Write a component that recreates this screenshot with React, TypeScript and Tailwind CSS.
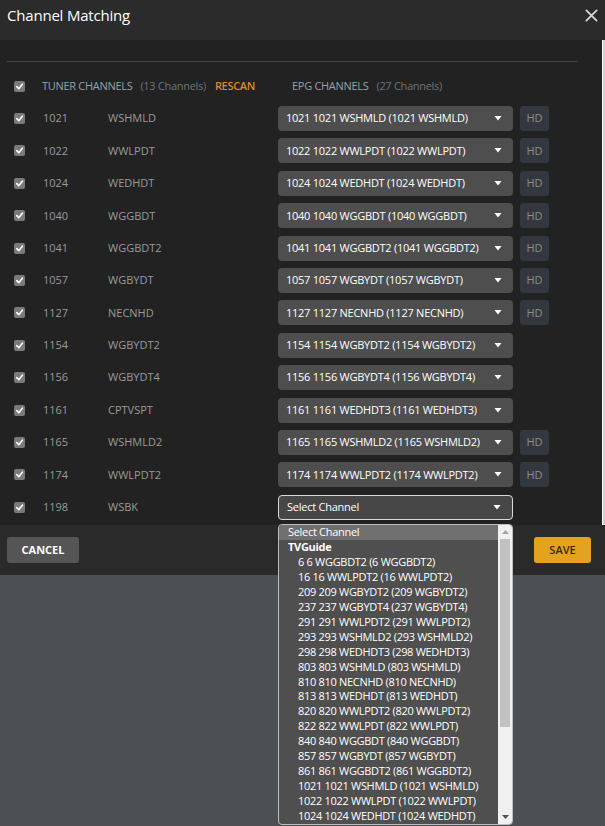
import React from "react";

type Row = { num: string; name: string; epg: string; hd: boolean };

const rows: Row[] = [
  { num: "1021", name: "WSHMLD", epg: "1021 1021 WSHMLD (1021 WSHMLD)", hd: true },
  { num: "1022", name: "WWLPDT", epg: "1022 1022 WWLPDT (1022 WWLPDT)", hd: true },
  { num: "1024", name: "WEDHDT", epg: "1024 1024 WEDHDT (1024 WEDHDT)", hd: true },
  { num: "1040", name: "WGGBDT", epg: "1040 1040 WGGBDT (1040 WGGBDT)", hd: true },
  { num: "1041", name: "WGGBDT2", epg: "1041 1041 WGGBDT2 (1041 WGGBDT2)", hd: true },
  { num: "1057", name: "WGBYDT", epg: "1057 1057 WGBYDT (1057 WGBYDT)", hd: true },
  { num: "1127", name: "NECNHD", epg: "1127 1127 NECNHD (1127 NECNHD)", hd: true },
  { num: "1154", name: "WGBYDT2", epg: "1154 1154 WGBYDT2 (1154 WGBYDT2)", hd: false },
  { num: "1156", name: "WGBYDT4", epg: "1156 1156 WGBYDT4 (1156 WGBYDT4)", hd: false },
  { num: "1161", name: "CPTVSPT", epg: "1161 1161 WEDHDT3 (1161 WEDHDT3)", hd: false },
  { num: "1165", name: "WSHMLD2", epg: "1165 1165 WSHMLD2 (1165 WSHMLD2)", hd: true },
  { num: "1174", name: "WWLPDT2", epg: "1174 1174 WWLPDT2 (1174 WWLPDT2)", hd: true },
];

const options = [
  "6 6 WGGBDT2 (6 WGGBDT2)",
  "16 16 WWLPDT2 (16 WWLPDT2)",
  "209 209 WGBYDT2 (209 WGBYDT2)",
  "237 237 WGBYDT4 (237 WGBYDT4)",
  "291 291 WWLPDT2 (291 WWLPDT2)",
  "293 293 WSHMLD2 (293 WSHMLD2)",
  "298 298 WEDHDT3 (298 WEDHDT3)",
  "803 803 WSHMLD (803 WSHMLD)",
  "810 810 NECNHD (810 NECNHD)",
  "813 813 WEDHDT (813 WEDHDT)",
  "820 820 WWLPDT2 (820 WWLPDT2)",
  "822 822 WWLPDT (822 WWLPDT)",
  "840 840 WGGBDT (840 WGGBDT)",
  "857 857 WGBYDT (857 WGBYDT)",
  "861 861 WGGBDT2 (861 WGGBDT2)",
  "1021 1021 WSHMLD (1021 WSHMLD)",
  "1022 1022 WWLPDT (1022 WWLPDT)",
  "1024 1024 WEDHDT (1024 WEDHDT)",
];

function Check() {
  return (
    <div className="w-[11px] h-[11px] rounded-[2px] bg-[#7a7a7a] flex items-center justify-center shrink-0">
      <svg width="9" height="9" viewBox="0 0 10 10">
        <path d="M2 5.2 L4.2 7.4 L8.2 2.4" fill="none" stroke="#ffffff" strokeWidth="1.8" strokeLinecap="round" strokeLinejoin="round" />
      </svg>
    </div>
  );
}

function Caret() {
  return (
    <svg width="8" height="5" viewBox="0 0 8 5" className="shrink-0">
      <path d="M0.5 0 L7.5 0 L4 4.5 Z" fill="#ffffff" />
    </svg>
  );
}

function Select({ label, open }: { label: string; open?: boolean }) {
  return (
    <div
      className={
        "w-[235px] h-[25px] rounded-[4px] flex items-center justify-between pl-[8px] pr-[11px] text-[11px] tracking-[-0.25px] text-white " +
        (open ? "bg-[#474747] border border-[#d8d8d8]" : "bg-[#4e4e4e]")
      }
    >
      <span className="whitespace-nowrap">{label}</span>
      <Caret />
    </div>
  );
}

export default function App() {
  return (
    <div
      className="relative w-[605px] h-[826px] overflow-hidden bg-[#4c5055]"
      style={{ fontFamily: '"Open Sans", "Noto Sans", sans-serif' }}
    >
      {/* header */}
      <div className="h-[40px] bg-[#2b2b2b] flex items-center justify-between pl-[7px] pr-[7px] pb-[9px]">
        <span className="text-[15px] text-white leading-none tracking-[-0.2px]">Channel Matching</span>
        <svg width="13" height="13" viewBox="0 0 14 14">
          <path d="M1.5 1.5 L12.5 12.5 M12.5 1.5 L1.5 12.5" stroke="#d6d6d6" strokeWidth="2" strokeLinecap="round" />
        </svg>
      </div>

      {/* body */}
      <div className="h-[485px] bg-[#222222] flex">
        <div className="flex-1 pt-[21px]">
          <div className="ml-[7px] w-[571px] h-px bg-[#444444]" />
          <div className="mt-[8px] h-[32.4px] flex items-center pl-[14px] text-[11px] tracking-[-0.3px]">
            <Check />
            <div className="ml-[17px] w-[250px] flex items-center whitespace-nowrap">
              <span className="text-[#98a0a8]">TUNER CHANNELS</span>
              <span className="ml-[8px] text-[#6c737a]">(13 Channels)</span>
              <span className="ml-[9px] text-[#d88a2c] font-semibold">RESCAN</span>
            </div>
            <div className="flex items-center whitespace-nowrap">
              <span className="text-[#98a0a8]">EPG CHANNELS</span>
              <span className="ml-[8px] text-[#6c737a]">(27 Channels)</span>
            </div>
          </div>
          {rows.map((r) => (
            <div key={r.num} className="h-[32.4px] flex items-center pl-[14px] text-[11px]">
              <Check />
              <span className="ml-[18px] w-[65px] text-[#9a9a9a]">{r.num}</span>
              <span className="w-[170px] text-[#9a9a9a]">{r.name}</span>
              <Select label={r.epg} />
              {r.hd && (
                <div className="ml-[7px] w-[29px] h-[25px] rounded-[3px] bg-[#32383d] flex items-center justify-center text-[11px] text-[#8a8f94]">
                  HD
                </div>
              )}
            </div>
          ))}
          <div className="h-[32.4px] flex items-center pl-[14px] text-[11px]">
            <Check />
            <span className="ml-[18px] w-[65px] text-[#9a9a9a]">1198</span>
            <span className="w-[170px] text-[#9a9a9a]">WSBK</span>
            <Select label="Select Channel" open />
          </div>
        </div>
        <div className="w-[3px] bg-[#cfcfcf] border-l border-white" />
      </div>

      {/* footer */}
      <div className="h-[50px] bg-[#2a2a2a] flex items-center justify-between pl-[7px] pr-[14px]">
        <button className="w-[72px] h-[26px] rounded-[3px] bg-[#555555] text-white text-[11px] font-bold">
          CANCEL
        </button>
        <button className="w-[57px] h-[26px] rounded-[3px] bg-[#e3a21f] text-[#3a2a14] text-[11px] font-semibold">
          SAVE
        </button>
      </div>

      {/* open dropdown list */}
      <div className="absolute left-[278px] top-[524px] w-[235px] h-[301px] bg-[#4f4f4f] border border-[#bdbdbd] rounded-[4px] overflow-hidden flex text-[11px] tracking-[-0.3px] text-white">
        <div className="flex-1 flex flex-col leading-[14px]">
          <div className="h-[15px] bg-[#707070] pl-[9px] whitespace-nowrap">Select Channel</div>
          <div className="h-[15px] pl-[9px] font-bold whitespace-nowrap">TVGuide</div>
          {options.map((o) => (
            <div key={o} className="h-[15px] pl-[19px] whitespace-nowrap">
              {o}
            </div>
          ))}
        </div>
        <div className="w-[14px] bg-[#f0f0f0] flex flex-col items-center">
          <div className="h-[14px] flex items-center justify-center">
            <svg width="7" height="4" viewBox="0 0 7 4">
              <path d="M0 4 L7 4 L3.5 0 Z" fill="#a3a3a3" />
            </svg>
          </div>
          <div className="w-[10px] h-[188px] bg-[#c1c1c1]" />
          <div className="flex-1" />
          <div className="h-[14px] flex items-center justify-center">
            <svg width="7" height="4" viewBox="0 0 7 4">
              <path d="M0 0 L7 0 L3.5 4 Z" fill="#505050" />
            </svg>
          </div>
        </div>
      </div>
    </div>
  );
}
